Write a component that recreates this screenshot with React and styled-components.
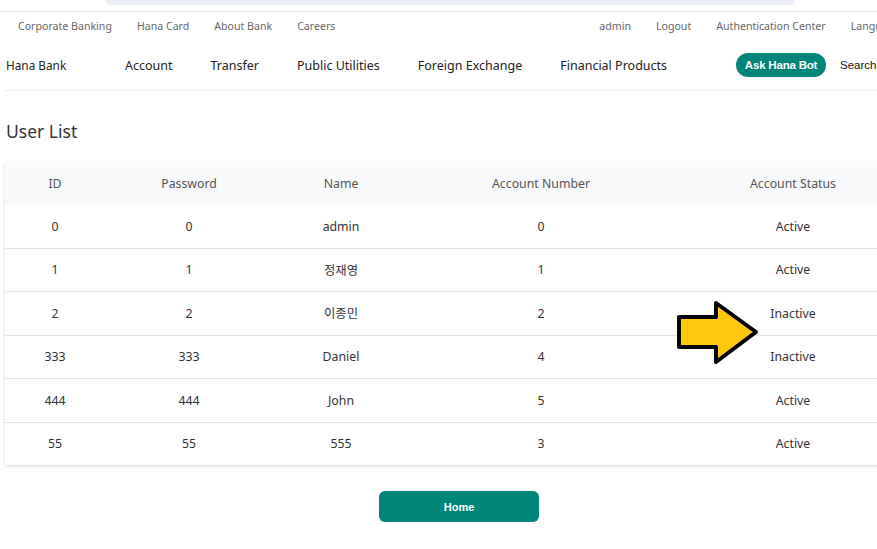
import React from 'react';
import styled, { createGlobalStyle } from 'styled-components';

const GlobalStyle = createGlobalStyle`
  html, body {
    margin: 0;
    padding: 0;
    background: #ffffff;
    overflow: hidden;
  }
  body {
    font-family: 'Noto Sans', 'Noto Sans CJK KR', sans-serif;
    color: #333333;
  }
`;

const Page = styled.div`
  position: relative;
  width: 920px;
  min-height: 549px;
`;

const SearchPill = styled.div`
  height: 5px;
  margin: 0 0 0 105px;
  width: 690px;
  background: #eaeff8;
  border-bottom-left-radius: 12px;
  border-bottom-right-radius: 12px;
`;

const UtilityBar = styled.div`
  margin-top: 6px;
  border-top: 1px solid #e6e6e6;
  height: 28px;
  display: flex;
  align-items: center;
  padding: 0 0 0 18px;
`;

const LinkGroup = styled.div`
  display: flex;
  align-items: center;
  gap: ${p => p.gap}px;
  margin-left: ${p => p.offset || 0}px;
`;

const UtilityLink = styled.a`
  font-size: 10.6px;
  color: #666666;
  text-decoration: none;
  white-space: nowrap;
`;

const MainNav = styled.nav`
  margin: 0 0 0 5px;
  height: 50px;
  border-bottom: 1px solid #ececec;
  display: flex;
  align-items: center;
`;

const Brand = styled.div`
  font-size: 11.8px;
  color: #222222;
  padding-left: 1px;
  width: 119px;
`;

const MenuList = styled.div`
  display: flex;
  align-items: center;
  gap: 38px;
`;

const MenuItem = styled.a`
  font-size: 12.5px;
  color: #222222;
  text-decoration: none;
  white-space: nowrap;
`;

const NavRight = styled.div`
  margin-left: 69px;
  display: flex;
  align-items: center;
  gap: 14px;
`;

const BotButton = styled.button`
  height: 24px;
  width: 90px;
  padding: 0;
  border: none;
  border-radius: 12px;
  background: #00857a;
  color: #ffffff;
  font-family: 'Liberation Sans', Arial, sans-serif;
  font-weight: 700;
  font-size: 11.5px;
  letter-spacing: -0.2px;
`;

const SearchLink = styled.span`
  font-family: 'Liberation Sans', Arial, sans-serif;
  font-size: 11.5px;
  color: #111111;
`;

const Content = styled.main`
  padding: 0 0 0 5px;
`;

const Title = styled.h2`
  margin: 26px 0 17px 1px;
  font-size: 17.5px;
  font-weight: 400;
  line-height: 28px;
  color: #333333;
`;

const Table = styled.table`
  width: 908px;
  border-collapse: collapse;
  box-shadow: 0 1px 3px rgba(0, 0, 0, 0.16);
  table-layout: fixed;
`;

const HeadCell = styled.th`
  background: #f8f9fa;
  height: 43px;
  padding: 0;
  font-size: 12.3px;
  font-weight: 400;
  color: #555555;
  text-align: center;
`;

const Row = styled.tr`
  border-bottom: 1px solid #e2e2e2;
  &:last-child {
    border-bottom: none;
  }
`;

const Cell = styled.td`
  height: 42.5px;
  padding: 0;
  font-size: 12.3px;
  color: #333333;
  text-align: center;
`;

const Footer = styled.div`
  display: flex;
  padding: 26px 0 0 374px;
`;

const HomeButton = styled.button`
  width: 160px;
  height: 31px;
  border: none;
  border-radius: 6px;
  background: #00857a;
  color: #ffffff;
  font-family: 'Liberation Sans', Arial, sans-serif;
  font-weight: 700;
  font-size: 11px;
`;

const Pointer = styled.svg`
  position: absolute;
  left: 672px;
  top: 296px;
`;

const columns = [
  { label: 'ID', width: 100 },
  { label: 'Password', width: 168 },
  { label: 'Name', width: 136 },
  { label: 'Account Number', width: 264 },
  { label: 'Account Status', width: 240 },
];

const users = [
  ['0', '0', 'admin', '0', 'Active'],
  ['1', '1', '정재영', '1', 'Active'],
  ['2', '2', '이종민', '2', 'Inactive'],
  ['333', '333', 'Daniel', '4', 'Inactive'],
  ['444', '444', 'John', '5', 'Active'],
  ['55', '55', '555', '3', 'Active'],
];

export default function App() {
  return (
    <Page>
      <GlobalStyle />
      <SearchPill />
      <UtilityBar>
        <LinkGroup gap={25}>
          <UtilityLink>Corporate Banking</UtilityLink>
          <UtilityLink>Hana Card</UtilityLink>
          <UtilityLink>About Bank</UtilityLink>
          <UtilityLink>Careers</UtilityLink>
        </LinkGroup>
        <LinkGroup gap={25} offset={264}>
          <UtilityLink>admin</UtilityLink>
          <UtilityLink>Logout</UtilityLink>
          <UtilityLink>Authentication Center</UtilityLink>
          <UtilityLink>Language</UtilityLink>
        </LinkGroup>
      </UtilityBar>
      <MainNav>
        <Brand>Hana Bank</Brand>
        <MenuList>
          <MenuItem>Account</MenuItem>
          <MenuItem>Transfer</MenuItem>
          <MenuItem>Public Utilities</MenuItem>
          <MenuItem>Foreign Exchange</MenuItem>
          <MenuItem>Financial Products</MenuItem>
        </MenuList>
        <NavRight>
          <BotButton>Ask Hana Bot</BotButton>
          <SearchLink>Search</SearchLink>
        </NavRight>
      </MainNav>
      <Content>
        <Title>User List</Title>
        <Table>
          <colgroup>
            {columns.map(c => (
              <col key={c.label} style={{ width: c.width }} />
            ))}
          </colgroup>
          <thead>
            <tr>
              {columns.map(c => (
                <HeadCell key={c.label}>{c.label}</HeadCell>
              ))}
            </tr>
          </thead>
          <tbody>
            {users.map(u => (
              <Row key={u[0]}>
                {u.map((v, i) => (
                  <Cell key={i}>{v}</Cell>
                ))}
              </Row>
            ))}
          </tbody>
        </Table>
        <Footer>
          <HomeButton>Home</HomeButton>
        </Footer>
      </Content>
      <Pointer width="90" height="72" viewBox="0 0 90 72">
        <path
          d="M7 21 L44 21 L44 7 L84 36 L44 66 L44 51 L7 51 Z"
          fill="#ffc80f"
          stroke="#000000"
          strokeWidth="4"
          strokeLinejoin="round"
        />
      </Pointer>
    </Page>
  );
}
